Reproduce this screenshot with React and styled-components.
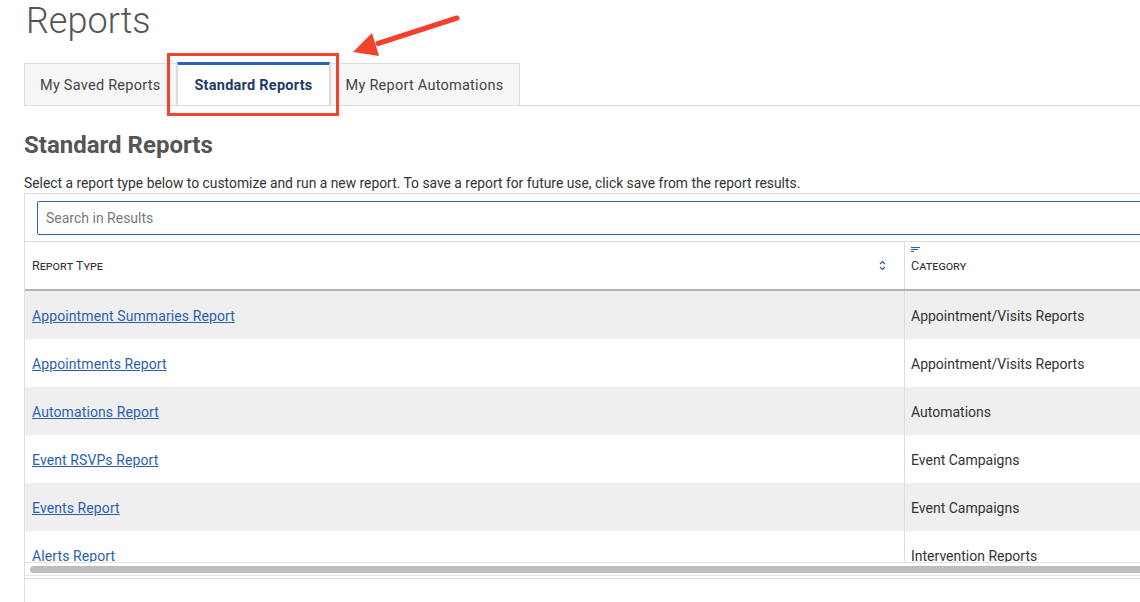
import React from 'react';
import styled, { createGlobalStyle } from 'styled-components';

const GlobalStyle = createGlobalStyle`
  html, body {
    margin: 0;
    padding: 0;
    background: #fff;
    overflow: hidden;
  }
  body {
    font-family: Roboto, "Liberation Sans", Arial, sans-serif;
    color: #333;
  }
`;

const rows = [
    { name: 'Appointment Summaries Report', category: 'Appointment/Visits Reports' },
    { name: 'Appointments Report', category: 'Appointment/Visits Reports' },
    { name: 'Automations Report', category: 'Automations' },
    { name: 'Event RSVPs Report', category: 'Event Campaigns' },
    { name: 'Events Report', category: 'Event Campaigns' },
    { name: 'Alerts Report', category: 'Intervention Reports' },
];

const tabs = ['My Saved Reports', 'Standard Reports', 'My Report Automations'];

const App = () => {
    return (
        <Page>
            <GlobalStyle />
            <Title>Reports</Title>
            <TabList>
                {tabs.map((t) => (
                    <Tab key={t} active={t === 'Standard Reports'}>{t}</Tab>
                ))}
            </TabList>

            <Heading>Standard Reports</Heading>
            <Description>
                Select a report type below to customize and run a new report. To save a report for future use, click save from the report results.
            </Description>

            <Card>
                <SearchBar>
                    <SearchInput placeholder="Search in Results" />
                </SearchBar>
                <Viewport>
                    <HeadRow>
                        <HeadCell first>
                            <span>Report Type</span>
                            <svg width="7" height="11" viewBox="0 0 7 11" fill="none" stroke="#3d5f97" strokeWidth="1.2">
                                <path d="M1 4 L3.5 1.5 L6 4" />
                                <path d="M1 7 L3.5 9.5 L6 7" />
                            </svg>
                        </HeadCell>
                        <HeadCell>
                            <FilterIcon width="10" height="7" viewBox="0 0 10 7" stroke="#2d62b0" strokeWidth="1">
                                <path d="M0 0.5 H9" />
                                <path d="M0 2.5 H7" />
                                <path d="M0 4.5 H3" />
                            </FilterIcon>
                            <span>Category</span>
                        </HeadCell>
                    </HeadRow>
                    {rows.map((r, i) => (
                        <Row key={r.name} striped={i % 2 === 0}>
                            <Cell first><ReportLink href="#">{r.name}</ReportLink></Cell>
                            <Cell>{r.category}</Cell>
                        </Row>
                    ))}
                </Viewport>
                <ScrollTrack>
                    <ScrollThumb />
                </ScrollTrack>
                <Footer />
            </Card>

            {/* annotation */}
            <Highlight />
            <Arrow width="130" height="70" viewBox="0 0 130 70">
                <path d="M117 18 L38 43.5" stroke="#f2412c" strokeWidth="5" strokeLinecap="round" />
                <polygon points="13,52 32,33 39,56" fill="#f2412c" />
            </Arrow>
        </Page>
    );
};

const Page = styled.div`
position: relative;
width: 1140px;
height: 602px;
overflow: hidden;
padding-left: 24px;
box-sizing: border-box;
`

const Title = styled.h1`
margin: 0 0 0 2px;
font-size: 36px;
line-height: 42px;
font-weight: 300;
color: #555;
`

const TabList = styled.div`
display: flex;
align-items: flex-end;
height: 43px;
margin-top: 20px;
border-bottom: 1px solid #ddd;
`

const Tab = styled.div`
box-sizing: border-box;
height: ${(p) => (p.active ? '43px' : '42px')};
display: flex;
align-items: center;
padding: ${(p) => (p.active ? '0 16px' : '1px 16px 0 15px')};
font-size: 14.5px;
letter-spacing: 0.25px;
background: ${(p) => (p.active ? '#fff' : '#f6f6f6')};
border: 1px solid #ddd;
border-bottom: none;
border-top: ${(p) => (p.active ? '3px solid #2a63b0' : '1px solid #ddd')};
color: ${(p) => (p.active ? '#1c3b6b' : '#444')};
font-weight: ${(p) => (p.active ? 700 : 400)};
`

const Heading = styled.h2`
margin: 25px 0 0;
font-size: 24px;
line-height: 28px;
font-weight: 700;
color: #555;
`

const Description = styled.p`
margin: 14px 0 0;
font-size: 13.85px;
line-height: 20px;
color: #333;
`

const Card = styled.div`
width: 1300px;
height: 420px;
border: 1px solid #ddd;
border-right: none;
overflow: hidden;
`

const SearchBar = styled.div`
padding: 7px 0 6px 12px;
border-bottom: 1px solid #ddd;
`

const SearchInput = styled.input`
box-sizing: border-box;
width: 1250px;
height: 34px;
border: 1px solid #2a63b0;
border-radius: 2px;
padding: 0 8px;
font-family: Roboto, "Liberation Sans", Arial, sans-serif;
font-size: 14px;
color: #333;
outline: none;
&::placeholder {
  color: #7a7a7a;
}
`

const Viewport = styled.div`
height: 320px;
overflow: hidden;
`

const HeadRow = styled.div`
display: grid;
grid-template-columns: 880px 1fr;
height: 47px;
border-bottom: 2px solid #b3b3b3;
`

const HeadCell = styled.div`
position: relative;
display: flex;
align-items: center;
justify-content: space-between;
padding: ${(p) => (p.first ? '0 18px 0 7px' : '0 6px')};
border-right: ${(p) => (p.first ? '1px solid #ddd' : 'none')};
font-size: 12.5px;
font-variant: small-caps;
color: #333;
`

const FilterIcon = styled.svg`
position: absolute;
left: 6px;
top: 5px;
`

const Row = styled.div`
display: grid;
grid-template-columns: 880px 1fr;
height: 48px;
background: ${(p) => (p.striped ? '#efefef' : '#fff')};
`

const Cell = styled.div`
display: flex;
align-items: center;
padding-top: 2px;
padding-left: ${(p) => (p.first ? '7px' : '6px')};
border-right: ${(p) => (p.first ? '1px solid #ddd' : 'none')};
font-size: 14px;
color: #333;
`

const ReportLink = styled.a`
color: #2a5fb0;
text-decoration: underline;
font-size: 14px;
letter-spacing: 0.1px;
`

const ScrollTrack = styled.div`
border-top: 1px solid #e0e0e0;
border-bottom: 1px solid #e3e3e3;
padding: 3px 0 2px 5px;
`

const ScrollThumb = styled.div`
height: 7px;
border-radius: 4px 0 0 4px;
background: #bdbdbd;
`

const Footer = styled.div`
margin-top: 2px;
border-top: 1px solid #ddd;
`

const Highlight = styled.div`
position: absolute;
left: 167px;
top: 53px;
width: 172px;
height: 63px;
box-sizing: border-box;
border: 3px solid #f2412c;
pointer-events: none;
`

const Arrow = styled.svg`
position: absolute;
left: 340px;
top: 0;
pointer-events: none;
`

export default App;
